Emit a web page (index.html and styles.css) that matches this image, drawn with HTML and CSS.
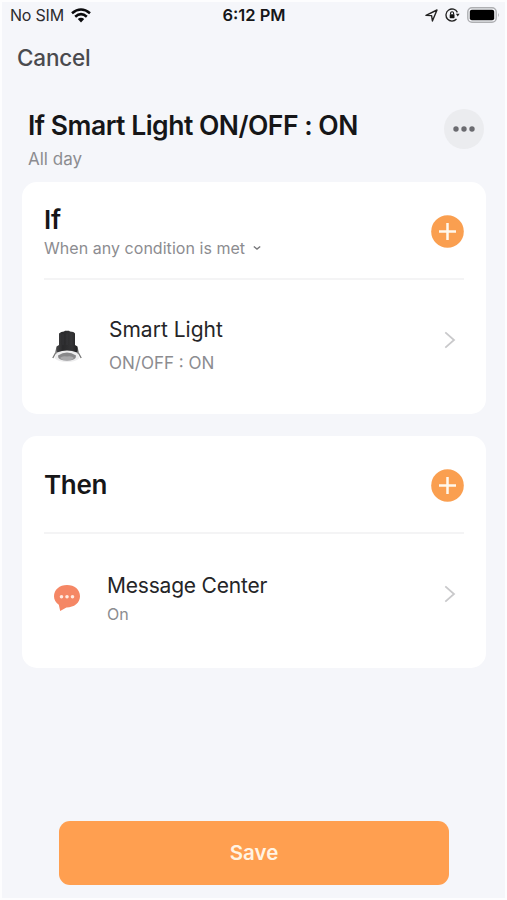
FILE: index.html
```
<!DOCTYPE html>
<html lang="en">
<head>
<meta charset="utf-8">
<title>Edit Scene</title>
<link rel="stylesheet" href="styles.css">
</head>
<body>
<main class="screen">
  <header class="status">
    <div class="status-left">
      <span class="carrier">No SIM</span>
      <svg width="20" height="15" viewBox="0 0 20 15"><g fill="none" stroke="#0b0b0d" stroke-width="2.6"><path d="M1 5.3Q10-2.3 19 5.3"/><path d="M4.2 8.7Q10 3.6 15.8 8.7"/></g><path d="M6.8 11.1Q10 8.3 13.2 11.1L10 14.4Z" fill="#0b0b0d"/></svg>
    </div>
    <span class="time">6:12 PM</span>
    <div class="status-right">
      <svg width="13" height="13" viewBox="0 0 13 13"><path d="M1 6.4 12 1 7.4 12 6.6 6.6Z" fill="none" stroke="#222" stroke-width="1.4" stroke-linejoin="round"/></svg>
      <svg width="15" height="14" viewBox="0 0 15 14"><path d="M12.4 4.400A6 6 0 1 0 11.500 11" fill="none" stroke="#222" stroke-width="1.3"/><path d="M10.900 5.800h3.700l-1.900 2.700z" fill="#222"/><rect x="4.700" y="6.2" width="4.800" height="4" rx=".6" fill="#111"/><path d="M5.600 6.6V5.300a1.500 1.500 0 0 1 3 0v1.3" fill="none" stroke="#111" stroke-width="1.1"/></svg>
      <svg width="33" height="16" viewBox="0 0 33 16"><rect x=".8" y=".8" width="28.4" height="14.4" rx="4.2" fill="#f5f6fa" stroke="#aeafb2" stroke-width="1.4"/><rect x="2.8" y="2.8" width="24.4" height="10.4" rx="2" fill="#000"/><path d="M31 5.8q1.8 2.2 0 4.4z" fill="#aeafb2"/></svg>
    </div>
  </header>
  <nav class="nav"><span class="cancel">Cancel</span></nav>
  <section class="heading">
    <div>
      <h1 class="title">If Smart Light ON/OFF : ON</h1>
      <p class="period">All day</p>
    </div>
    <button class="more" aria-label="More"><svg width="24" height="6" viewBox="0 0 24 6" fill="#6b6b70"><circle cx="4" cy="3" r="2.7"/><circle cx="12" cy="3" r="2.7"/><circle cx="20" cy="3" r="2.7"/></svg></button>
  </section>

  <section class="card">
    <div class="card-head">
      <div>
        <h2 class="card-title">If</h2>
        <p class="rule"><span>When any condition is met</span><svg width="8" height="6" viewBox="0 0 8 6"><path d="M.8 1.5 4 4l3.200-2.500" fill="none" stroke="#77777a" stroke-width="1.4"/></svg></p>
      </div>
      <button class="add" aria-label="Add condition"><svg width="33" height="33" viewBox="0 0 33 33"><circle cx="16.500" cy="16.500" r="16.300" fill="#fa9f50"/><path d="M8 16.500h17M16.500 8v17" stroke="#fff8ec" stroke-width="2.500"/></svg></button>
    </div>
    <div class="item">
      <svg class="lamp" width="30" height="34" viewBox="0 0 30 34"><defs><linearGradient id="body"><stop offset="0" stop-color="#444446"/><stop offset=".3" stop-color="#29292b"/><stop offset=".75" stop-color="#343436"/><stop offset="1" stop-color="#202022"/></linearGradient></defs><path d="M5 17.500 3.800 22.500.8 28M25 17.500l1.200 5 3 5.500" fill="none" stroke="#777" stroke-width="1.300"/><path d="M7 3.500Q9 1.500 12 1.500L13 .8h4l1 .7q4 0 5 2V15l2.500 1.500V24h-21v-7.500L7 15z" fill="url(#body)"/><path d="M11 4v11M15 3.500V15M19 4v11" stroke="#434345" stroke-width=".5"/><path d="M5 22.500Q15 18.500 25 22.500L27.500 28Q24 32 15 32T2.500 28Z" fill="#ededee"/><path d="M6 25.500Q15 19.500 24 25.500Q24.500 30.500 15 30.500T6 25.500Z" fill="#88888a"/><path d="M8 28Q10 25.500 15 26.500Q20 25.500 22 28Q20 30.500 15 30.500T8 28Z" fill="#a9a9ab"/></svg>
      <div class="item-text">
        <h3 class="item-name light">Smart Light</h3>
        <p class="item-value state">ON/OFF : ON</p>
      </div>
      <svg class="chevron" width="12" height="18" viewBox="0 0 12 18"><path d="M1.300 1.300 10 9l-8.700 7.700" fill="none" stroke="#c9c9cb" stroke-width="1.800"/></svg>
    </div>
  </section>

  <section class="card then">
    <div class="card-head">
      <h2 class="card-title">Then</h2>
      <button class="add" aria-label="Add action"><svg width="33" height="33" viewBox="0 0 33 33"><circle cx="16.500" cy="16.500" r="16.300" fill="#fa9f50"/><path d="M8 16.500h17M16.500 8v17" stroke="#fff8ec" stroke-width="2.500"/></svg></button>
    </div>
    <div class="item">
      <svg class="bubble" width="28" height="28" viewBox="0 0 28 28"><path d="M14 1C6.500 1 1 5.800 1 12.200c0 3.500 1.800 6.500 4.800 8.600L7.200 27l6.200-3.600C21 23.500 27 18.800 27 12.200S21.500 1 14 1Z" fill="#f58765"/><g fill="#ffe9df"><circle cx="8.500" cy="12.700" r="1.800"/><circle cx="14" cy="12.700" r="1.800"/><circle cx="19.500" cy="12.700" r="1.800"/></g></svg>
      <div class="item-text">
        <h3 class="item-name message">Message Center</h3>
        <p class="item-value on">On</p>
      </div>
      <svg class="chevron" width="12" height="18" viewBox="0 0 12 18"><path d="M1.300 1.300 10 9l-8.700 7.700" fill="none" stroke="#c9c9cb" stroke-width="1.800"/></svg>
    </div>
  </section>
  <button class="save">Save</button>
</main>
</body>
</html>
```
FILE: styles.css
```
* { box-sizing: border-box; margin: 0; padding: 0; }
body { background: #fdfdfe; font-family: Inter, "Liberation Sans", sans-serif; color: #161618; }
button { border: 0; background: none; font-family: inherit; display: flex; align-items: center; justify-content: center; }
svg { display: block; flex: none; }
h1, h2, h3, p, span { white-space: nowrap; }
.screen { width: 507px; height: 900px; border: 2px solid #fdfdfe; background: #f5f6fa; display: flex; flex-direction: column; overflow: hidden; }
.status { height: 26px; padding: 0 5px 0 8px; display: grid; grid-template-columns: 1fr auto 1fr; align-items: center; }
.status-left, .status-right { display: flex; align-items: center; }
.status-left { gap: 7px; }
.status-right { justify-content: flex-end; gap: 7px; }
.status-left, .time { position: relative; left: -1px; }
.carrier { font-size: 16px; line-height: 20px; color: #2c2c2e; padding-left: 1px; letter-spacing: -.2px; }
.time { font-size: 16.500px; line-height: 20px; font-weight: 600; }
.nav { height: 60px; padding: 15px 15px 0; }
.cancel { display: block; font-size: 22.500px; line-height: 30px; font-weight: 500; letter-spacing: -.2px; color: #4a4a4e; }
.heading { height: 94px; padding: 20px 21px 0 26px; display: flex; justify-content: space-between; }
.title { font-size: 26.500px; line-height: 34px; font-weight: 600; letter-spacing: -.5px; }
.period { font-size: 17px; line-height: 24px; margin-top: 5px; color: #8c8c90; }
.more { width: 40px; height: 40px; border-radius: 50%; background: #ebecef; margin-top: 1px; }
.card { width: 464px; height: 232px; margin-left: 20px; padding: 0 22px; border-radius: 15px; background: #fff; }
.card + .card { margin-top: 22px; }
.card-head { height: 98px; padding-top: 2px; display: flex; align-items: center; justify-content: space-between; border-bottom: 2px solid #f4f4f5; }
.card-title { font-size: 26px; line-height: 34px; font-weight: 600; letter-spacing: -.3px; }
.rule { font-size: 16px; line-height: 22px; color: #8c8c90; letter-spacing: .04px; display: flex; align-items: center; gap: 8px; }
.item { height: 134px; display: flex; align-items: flex-start; padding-right: 8px; }
.item-text { flex: 1; }
.item-name { font-size: 21px; line-height: 28px; font-weight: 400; color: #252527; }
.item-value { color: #8c8c90; line-height: 24px; }
.lamp { margin: 50px 27px 0 8px; }
.light { margin-top: 36px; }
.state { font-size: 17px; margin-top: 7px; }
.bubble { margin: 50px 26px 0 9px; }
.message { margin-top: 38px; letter-spacing: -.2px; }
.on { font-size: 16px; margin-top: 2px; }
.chevron { margin-top: 51px; }
.save { width: 390px; height: 64px; margin: 153px 0 0 57px; padding-bottom: 1px; border-radius: 11px; background: #ff9f50; color: #fff4e4; font-size: 20.500px; font-weight: 600; }
```
